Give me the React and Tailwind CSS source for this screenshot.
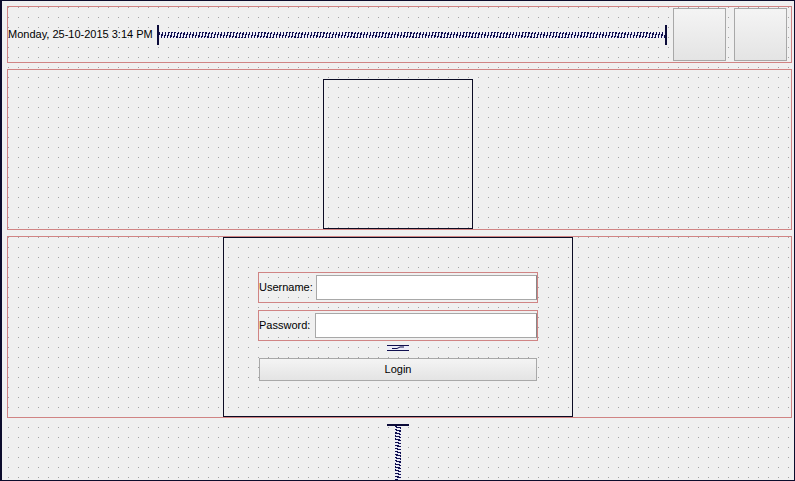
import React from 'react';

const font = { fontFamily: '"Liberation Sans", Arial, sans-serif' };

const HSpring = () => (
    <div className="relative flex items-center h-[20px] w-[510px]">
        <div className="w-[2px] h-[20px] bg-[#0c0c3a]" />
        <div className="flex-1 h-[6px] bg-[#ececf8] bg-[repeating-linear-gradient(105deg,#101050_0_1.3px,transparent_1.3px_3px)]" />
        <div className="w-[2px] h-[20px] bg-[#0c0c3a]" />
    </div>
);

const ToolButton = () => (
    <div className="w-[53px] h-[53px] border border-[#a8a8a8] bg-gradient-to-b from-[#f4f4f4] to-[#e4e4e4]" />
);

const FormRow = ({ label, inputWidth }) => (
    <div className="flex items-center justify-between w-[280px] h-[31px] border border-[#d08484]">
        <span className="text-[11px] text-black leading-none">{label}</span>
        <div className={`${inputWidth} h-[25px] bg-white border border-[#a8a8a8] border-r-[#888]`} />
    </div>
);

const App = () => {
    return (
        <div
            className="w-[795px] h-[481px] overflow-hidden border-l-2 border-t border-r border-b border-[#0c0c2c] bg-[#f0f0f0] bg-[radial-gradient(circle_at_0.5px_0.5px,#a4a4a4_0.7px,transparent_0.8px)] bg-size-[10px_10px] bg-position-[6px_6px] pl-[5px] pr-[2px] pt-[5px] flex flex-col"
            style={font}
        >
            {/* top bar */}
            <div className="h-[57px] border border-[#d08484] flex items-center">
                <div className="w-[149px] text-[11px] text-black whitespace-nowrap">Monday, 25-10-2015 3:14 PM</div>
                <HSpring />
                <div className="ml-[6px] flex gap-[8px]">
                    <ToolButton />
                    <ToolButton />
                </div>
            </div>

            {/* logo area */}
            <div className="mt-[6px] h-[161px] border border-[#d08484] flex items-start">
                <div className="ml-[315px] mt-[9px] w-[150px] h-[150px] border border-[#0c0c24]" />
            </div>

            {/* login area */}
            <div className="mt-[6px] h-[182px] border border-[#d08484] flex">
                <div className="ml-[215px] w-[350px] h-full border border-[#0c0c24] flex flex-col pl-[34px] pt-[34px]">
                    <FormRow label="Username:" inputWidth="w-[221px]" />
                    <div className="mt-[7px]">
                        <FormRow label="Password:" inputWidth="w-[222px]" />
                    </div>
                    <div className="w-[280px] flex justify-center mt-[4px]">
                        <svg width="22" height="6" viewBox="0 0 22 6">
                            <rect x="0" y="0" width="22" height="6" fill="#ececf8" />
                            <line x1="0" y1="0.5" x2="22" y2="0.5" stroke="#101050" strokeWidth="1" />
                            <line x1="0" y1="5.5" x2="22" y2="5.5" stroke="#101050" strokeWidth="1" />
                            <path d="M5 3.5 H10 L13 2 H17" fill="none" stroke="#101050" strokeWidth="1" />
                        </svg>
                    </div>
                    <button className="mt-[7px] ml-[1px] w-[278px] h-[23px] border border-[#a8a8a8] bg-gradient-to-b from-[#f4f4f4] to-[#e4e4e4] text-[11px] text-black">
                        Login
                    </button>
                </div>
            </div>

            {/* bottom spacer */}
            <div className="flex-1 flex flex-col items-center pt-[6px] ml-[-5px] pl-[2px]">
                <div className="w-[22px] h-[2px] bg-[#0c0c3a]" />
                <div className="flex-1 w-[6px] bg-[#ececf8] bg-[repeating-linear-gradient(15deg,#101050_0_1.3px,transparent_1.3px_3px)]" />
            </div>
        </div>
    );
};

export default App;
